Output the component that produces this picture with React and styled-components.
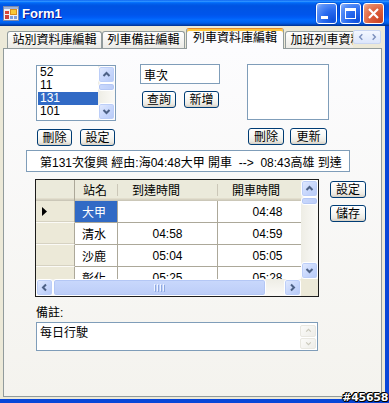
import React from 'react';
import styled, { createGlobalStyle } from 'styled-components';

const GlobalStyle = createGlobalStyle`
  html, body { margin: 0; padding: 0; background: #fff; }
  body {
    font-family: "Liberation Sans", "Noto Sans CJK TC", sans-serif;
    font-size: 12px;
    color: #000;
  }
`;

const Window = styled.div`
  position: relative;
  width: 389px;
  height: 403px;
  display: flex;
  flex-direction: column;
  overflow: hidden;
`;

const TitleBar = styled.div`
  flex: none;
  height: 26px;
  display: flex;
  align-items: center;
  padding: 0 5px 0 3px;
  background: linear-gradient(180deg, #0058ee 0%, #3593ff 4%, #288eff 6%, #127dff 8%, #036ffc 10%,
    #0262ee 14%, #0057e5 20%, #0054e3 24%, #0055eb 56%, #005bf5 66%, #026afe 76%, #0062ef 86%,
    #0052d6 92%, #0040ab 96%, #003092 100%);
`;

const Title = styled.div`
  margin-left: 3px;
  flex: 1;
  font-family: "Liberation Sans", sans-serif;
  font-weight: bold;
  font-size: 13px;
  color: #fff;
  text-shadow: 1px 1px #0f1089;
`;

const CapButton = styled.div`
  width: 21px;
  height: 21px;
  box-sizing: border-box;
  margin-left: ${p => p.$ml}px;
  border: 1px solid #fff;
  border-radius: 3px;
  display: flex;
  align-items: center;
  justify-content: center;
  background: ${p => p.$close
    ? 'radial-gradient(circle at 85% 85%, #cc4625 0%, #dc5d3a 45%, #e88a68 80%, #f2b9a3 100%)'
    : 'radial-gradient(circle at 85% 85%, #0d4fdc 0%, #2a6cf0 45%, #5d93f8 80%, #9dbcfa 100%)'};
  box-shadow: 0 0 0 0.5px rgba(0, 20, 120, 0.4);
`;

const Body = styled.div`
  flex: 1;
  min-height: 0;
  display: flex;
  flex-direction: column;
  background: #ece9d8;
  padding: 2px 3px 2px 3px;
  border-right: 4px solid #0846d8;
  border-bottom: 4px solid #0846d8;
`;

const TabStrip = styled.div`
  flex: none;
  position: relative;
  z-index: 1;
  height: 21px;
  margin-bottom: -1px;
  display: flex;
  align-items: flex-start;
`;

const TabList = styled.div`
  width: 350px;
  height: 21px;
  box-sizing: border-box;
  padding-left: 2px;
  display: flex;
  align-items: flex-end;
  overflow: hidden;
`;

const Tab = styled.div`
  flex: none;
  box-sizing: border-box;
  width: ${p => p.$w}px;
  height: ${p => (p.$active ? 21 : 17)}px;
  margin-left: ${p => p.$ml}px;
  margin-bottom: ${p => (p.$active ? 0 : 1)}px;
  border: 1px solid #919b9c;
  border-bottom: none;
  border-top-color: ${p => (p.$active ? '#e68b2c' : '#919b9c')};
  border-radius: 3px 3px 0 0;
  background: ${p => (p.$active ? '#fcfcfe' : 'linear-gradient(#ffffff, #ecebe6)')};
  box-shadow: ${p => (p.$active ? 'inset 0 2px #ffc83c' : 'none')};
  display: flex;
  align-items: center;
  justify-content: center;
  padding-bottom: ${p => (p.$active ? 3 : 0)}px;
  white-space: nowrap;
  line-height: 14px;
`;

const TabScroller = styled.div`
  width: 28px;
  height: 14px;
  margin-top: 2px;
  box-sizing: border-box;
  border: 1px solid #c9d6f2;
  border-radius: 2px;
  background: linear-gradient(#f3f7ff, #dce6fb);
  display: flex;
  align-items: center;
  justify-content: space-around;
`;

const Panel = styled.div`
  flex: 1;
  min-height: 0;
  border: 1px solid #919b9c;
  background: linear-gradient(#fcfcfe, #f4f3ee);
  padding-top: 15px;
  display: flex;
  flex-direction: column;
`;

const TopRow = styled.div`
  display: flex;
  align-items: flex-start;
  padding-left: 32px;
`;

const Group = styled.div`
  display: flex;
  flex-direction: column;
  margin-left: ${p => p.$ml || 0}px;
  margin-top: ${p => p.$mt || 0}px;
`;

const ButtonRow = styled.div`
  display: flex;
  gap: ${p => p.$gap}px;
  margin-top: ${p => p.$mt}px;
  padding-left: ${p => p.$pl || 0}px;
`;

const Button = styled.div`
  flex: none;
  width: ${p => p.$w || 35}px;
  height: 17px;
  box-sizing: border-box;
  border: 1px solid #003c74;
  border-radius: 3px;
  background: linear-gradient(180deg, #ffffff 0%, #f8f8f5 45%, #eceae3 80%, #d6d0c5 100%);
  display: flex;
  align-items: center;
  justify-content: center;
  line-height: 14px;
`;

const ListBox = styled.div`
  width: ${p => p.$w}px;
  height: 56px;
  box-sizing: border-box;
  border: 1px solid #7f9db9;
  background: #fff;
  display: flex;
`;

const ListItems = styled.div`
  flex: 1;
`;

const ListItem = styled.div`
  height: 13px;
  line-height: 13px;
  margin-left: 1px;
  padding-left: 2px;
  background: ${p => (p.$sel ? '#316ac5' : 'transparent')};
  color: ${p => (p.$sel ? '#fff' : '#000')};
`;

const TextBox = styled.div`
  width: 80px;
  height: 20px;
  box-sizing: border-box;
  border: 1px solid #7f9db9;
  background: #fff;
  padding-left: 3px;
  display: flex;
  align-items: center;
`;

const InfoBox = styled.div`
  width: 324px;
  height: 22px;
  margin: 4px 0 0 22px;
  box-sizing: border-box;
  border: 1px solid #7f9db9;
  background: #fff;
  padding-left: 13px;
  display: flex;
  align-items: center;
  white-space: pre;
`;

const GridRow = styled.div`
  display: flex;
  align-items: flex-start;
  margin-top: 7px;
  padding-left: 31px;
`;

const Grid = styled.div`
  width: 284px;
  height: 118px;
  box-sizing: border-box;
  border: 1px solid #1c1c1c;
  display: grid;
  grid-template-columns: 265px 17px;
  grid-template-rows: 99px 17px;
`;

const GridView = styled.div`
  overflow: hidden;
  background: #fff;
`;

const HeadRow = styled.div`
  height: 21px;
  display: flex;
  background: #ebeadb;
  box-shadow: inset 0 -1px #cbc7b8, inset 0 -2px #d6d2c2, inset 0 -3px #e2decd;
`;

const HeadCell = styled.div`
  flex: none;
  position: relative;
  width: ${p => p.$w}px;
  box-sizing: border-box;
  display: flex;
  align-items: center;
  justify-content: ${p => (p.$left ? 'flex-start' : 'center')};
  padding: ${p => (p.$left ? '0 0 2px 8px' : '0 24px 2px 0')};
  border-right: ${p => (p.$corner ? '1px solid #aca899' : 'none')};
  &::after {
    content: '';
    display: ${p => (p.$corner ? 'none' : 'block')};
    position: absolute;
    right: 0;
    top: 4px;
    bottom: 5px;
    width: 1px;
    background: #cbc7b8;
  }
`;

const DataRow = styled.div`
  height: 22px;
  display: flex;
`;

const RowHead = styled.div`
  flex: none;
  width: 39px;
  box-sizing: border-box;
  background: #ece9d8;
  border-right: 1px solid #aca899;
  border-bottom: 1px solid #fbfaf6;
  box-shadow: inset 0 -1px #d6d2c2;
  display: flex;
  align-items: center;
  padding-left: 6px;
`;

const Cell = styled.div`
  flex: none;
  width: ${p => p.$w}px;
  box-sizing: border-box;
  border-right: 1px solid #aca899;
  border-bottom: 1px solid #aca899;
  background: ${p => (p.$sel ? '#316ac5' : '#fff')};
  color: ${p => (p.$sel ? '#fff' : '#000')};
  display: flex;
  align-items: center;
  justify-content: ${p => (p.$left ? 'flex-start' : 'center')};
  padding-left: ${p => (p.$left ? 7 : 0)}px;
`;

const VBar = styled.div`
  width: 17px;
  flex: none;
  display: flex;
  flex-direction: column;
  background: linear-gradient(90deg, #eeede5, #fbfaf7);
`;

const HBar = styled.div`
  display: flex;
  background: linear-gradient(180deg, #eeede5, #fbfaf7);
`;

const Corner = styled.div`
  background: #ece9d8;
`;

const ScrollButton = styled.div`
  flex: none;
  width: 17px;
  height: 17px;
  box-sizing: border-box;
  border: 1px solid #fff;
  border-radius: 3px;
  background: linear-gradient(135deg, #e3ebfe 0%, #c9d8fc 50%, #b6c9f7 100%);
  box-shadow: inset 0 0 0 1px #bccef8;
  display: flex;
  align-items: center;
  justify-content: center;
`;

const Thumb = styled.div`
  flex: none;
  box-sizing: border-box;
  width: ${p => (p.$len && p.$horiz ? `${p.$len}px` : '17px')};
  height: ${p => (p.$len && !p.$horiz ? `${p.$len}px` : '17px')};
  border: 1px solid #fff;
  border-radius: 3px;
  background: linear-gradient(${p => (p.$horiz ? '180deg' : '90deg')}, #c9d8fc 0%, #bccdf8 100%);
  box-shadow: inset 0 0 0 1px #b4c7f5;
  display: flex;
  align-items: center;
  justify-content: center;
  gap: 1px;
`;

const Grip = styled.div`
  width: 1px;
  height: 7px;
  background: #eef3ff;
  box-shadow: 1px 1px #8fa9e0;
  margin-right: 1px;
`;

const Spacer = styled.div`
  flex: 1;
`;

const SideButtons = styled.div`
  display: flex;
  flex-direction: column;
  gap: 7px;
  margin: 2px 0 0 11px;
`;

const NoteLabel = styled.div`
  margin: 9px 0 0 32px;
  line-height: 14px;
`;

const NoteBox = styled.div`
  width: 282px;
  height: 29px;
  margin: 2px 0 0 32px;
  box-sizing: border-box;
  border: 1px solid #7f9db9;
  background: #fff;
  display: flex;
`;

const NoteText = styled.div`
  flex: 1;
  padding: 3px 0 0 3px;
  line-height: 14px;
`;

const NoteScroll = styled.div`
  width: 17px;
  display: flex;
  flex-direction: column;
  gap: 1px;
  padding: 2px 1px 1px 0;
  box-sizing: border-box;
`;

const DisabledArrow = styled.div`
  flex: 1;
  border: 1px solid #e9e8e1;
  border-radius: 2px;
  background: linear-gradient(135deg, #fbfbf9, #eeede8);
  display: flex;
  align-items: center;
  justify-content: center;
`;

const Watermark = styled.div`
  position: absolute;
  right: 1px;
  bottom: 0;
  font-family: "DejaVu Sans", sans-serif;
  font-weight: bold;
  font-size: 11px;
  line-height: 11px;
  color: #fff;
  letter-spacing: -0.3px;
  text-shadow: -1px 0 #000, 1px 0 #000, 0 -1px #000, 0 1px #000, 1px 1px #000, -1px -1px #000;
`;

const Chevron = ({ dir, color = '#4d6185', size = 9, width = 2 }) => {
  const d = {
    up: 'M1.5 6 L4.5 3 L7.5 6',
    down: 'M1.5 3 L4.5 6 L7.5 3',
    left: 'M6 1.5 L3 4.5 L6 7.5',
    right: 'M3 1.5 L6 4.5 L3 7.5',
  }[dir];
  return (
    <svg width={size} height={size} viewBox="0 0 9 9">
      <path d={d} fill="none" stroke={color} strokeWidth={width} />
    </svg>
  );
};

const AppIcon = () => (
  <svg width="16" height="15" viewBox="0 0 16 15">
    <rect x="0.5" y="0.5" width="15" height="14" fill="#eef0f7" stroke="#7a88ad" />
    <rect x="1" y="1" width="14" height="2" fill="#9fb2dc" />
    <rect x="2" y="5" width="4" height="3" fill="#d5463a" />
    <rect x="2" y="9" width="4" height="4" fill="#c9413a" />
    <rect x="7.5" y="3.5" width="6" height="5" fill="#f7c83a" stroke="#d98e1c" />
    <rect x="7" y="10" width="3" height="3" fill="#7e9fde" />
    <rect x="11" y="10" width="3" height="3" fill="#7e9fde" />
  </svg>
);

const ScrollV = ({ thumb, thumbGap = 0 }) => (
  <VBar>
    <ScrollButton><Chevron dir="up" /></ScrollButton>
    <Thumb $len={thumb} style={{ marginTop: thumbGap }} />
    <Spacer />
    <ScrollButton><Chevron dir="down" /></ScrollButton>
  </VBar>
);

const tabs = [
  { label: '站別資料庫編輯', w: 95, ml: 2 },
  { label: '列車備註編輯', w: 83, ml: 0 },
  { label: '列車資料庫編輯', w: 98, ml: 1, active: true },
  { label: '加班列車資料庫編輯', w: 119, ml: 1 },
];

const trains = ['52', '11', '131', '101'];

const stops = [
  { name: '大甲', arr: '', dep: '04:48', sel: true },
  { name: '清水', arr: '04:58', dep: '04:59' },
  { name: '沙鹿', arr: '05:04', dep: '05:05' },
  { name: '彰化', arr: '05:25', dep: '05:28' },
];

export default function App() {
  return (
    <>
      <GlobalStyle />
      <Window>
        <TitleBar>
          <AppIcon />
          <Title>Form1</Title>
          <CapButton $ml={0}>
            <svg width="19" height="19" viewBox="0 0 19 19">
              <rect x="4" y="12" width="7" height="3" fill="#fff" />
            </svg>
          </CapButton>
          <CapButton $ml={3}>
            <svg width="19" height="19" viewBox="0 0 19 19">
              <rect x="4.5" y="4.5" width="10" height="10" fill="none" stroke="#fff" />
              <rect x="4" y="4" width="11" height="3" fill="#fff" />
            </svg>
          </CapButton>
          <CapButton $ml={2} $close>
            <svg width="19" height="19" viewBox="0 0 19 19">
              <path d="M5 5 L14 14 M14 5 L5 14" stroke="#fff" strokeWidth="2.2" />
            </svg>
          </CapButton>
        </TitleBar>
        <Body>
          <TabStrip>
            <TabList>
              {tabs.map(t => (
                <Tab key={t.label} $w={t.w} $ml={t.ml} $active={t.active}>{t.label}</Tab>
              ))}
            </TabList>
            <TabScroller>
              <Chevron dir="left" color="#7b8fbc" size={8} width={1.6} />
              <Chevron dir="right" color="#7b8fbc" size={8} width={1.6} />
            </TabScroller>
          </TabStrip>
          <Panel>
            <TopRow>
              <Group $mt={1}>
                <ListBox $w={80}>
                  <ListItems>
                    {trains.map(n => <ListItem key={n} $sel={n === '131'}>{n}</ListItem>)}
                  </ListItems>
                  <ScrollV thumb={8} />
                </ListBox>
                <ButtonRow $gap={8} $mt={8} $pl={1}>
                  <Button>刪除</Button>
                  <Button>設定</Button>
                </ButtonRow>
              </Group>
              <Group $ml={24}>
                <TextBox>車次</TextBox>
                <ButtonRow $gap={8} $mt={7} $pl={2}>
                  <Button $w={34}>查詢</Button>
                  <Button>新增</Button>
                </ButtonRow>
              </Group>
              <Group $ml={27}>
                <ListBox $w={82} />
                <ButtonRow $gap={6} $mt={8} $pl={1}>
                  <Button $w={36}>刪除</Button>
                  <Button $w={37}>更新</Button>
                </ButtonRow>
              </Group>
            </TopRow>

            <InfoBox>{'第131次復興 經由:海04:48大甲 開車  -->  08:43高雄 到達'}</InfoBox>

            <GridRow>
              <Grid>
                <GridView>
                  <HeadRow>
                    <HeadCell $w={39} $corner />
                    <HeadCell $w={43} $left>站名</HeadCell>
                    <HeadCell $w={100}>到達時間</HeadCell>
                    <HeadCell $w={100}>開車時間</HeadCell>
                  </HeadRow>
                  {stops.map(s => (
                    <DataRow key={s.name}>
                      <RowHead>
                        {s.sel && (
                          <svg width="5" height="9" viewBox="0 0 5 9">
                            <path d="M0 0 L5 4.5 L0 9 Z" fill="#000" />
                          </svg>
                        )}
                      </RowHead>
                      <Cell $w={43} $left $sel={s.sel}>{s.name}</Cell>
                      <Cell $w={100}>{s.arr}</Cell>
                      <Cell $w={100}>{s.dep}</Cell>
                    </DataRow>
                  ))}
                </GridView>
                <ScrollV thumb={8} />
                <HBar>
                  <ScrollButton><Chevron dir="left" /></ScrollButton>
                  <Thumb $horiz $len={213}>
                    <Grip /><Grip /><Grip /><Grip />
                  </Thumb>
                  <Spacer />
                  <ScrollButton><Chevron dir="right" /></ScrollButton>
                </HBar>
                <Corner />
              </Grid>
              <SideButtons>
                <Button $w={36}>設定</Button>
                <Button $w={36}>儲存</Button>
              </SideButtons>
            </GridRow>

            <NoteLabel>備註:</NoteLabel>
            <NoteBox>
              <NoteText>每日行駛</NoteText>
              <NoteScroll>
                <DisabledArrow><Chevron dir="up" color="#cac8bb" size={7} width={1.4} /></DisabledArrow>
                <DisabledArrow><Chevron dir="down" color="#cac8bb" size={7} width={1.4} /></DisabledArrow>
              </NoteScroll>
            </NoteBox>
          </Panel>
        </Body>
        <Watermark>#45658</Watermark>
      </Window>
    </>
  );
}
